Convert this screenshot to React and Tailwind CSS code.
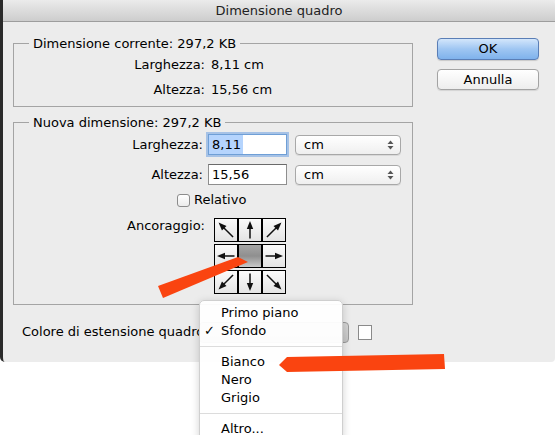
import React from "react";

const font = "font-['DejaVu_Sans',sans-serif]";

function Arrow({ angle = 0, diag = false }) {
	// base arrow points up; rotated around the cell centre
	const len = diag ? 10 : 8.5;
	return (
		<svg width="22" height="22" viewBox="0 0 22 22" className="overflow-visible">
			<g transform={`rotate(${angle} 11 11)`}>
				<line x1="11" y1={11 + len} x2="11" y2={11 - len + 5} stroke="#111" strokeWidth="1.5" />
				<polygon points={`11,${11 - len - 0.5} 7.8,${11 - len + 7.5} 14.2,${11 - len + 7.5}`} fill="#111" />
			</g>
		</svg>
	);
}

function Cell({ children, center }) {
	return (
		<div
			className={`w-[24px] h-[24px] border border-black flex items-center justify-center ${
				center
					? "bg-gradient-to-b from-[#a6a6a6] via-[#8f8f8f] to-[#c9c9c9]"
					: "bg-gradient-to-b from-[#fbfbfb] to-[#e4e4e4]"
			}`}
		>
			{children}
		</div>
	);
}

function Select({ label, className = "" }) {
	return (
		<div
			className={`h-[20px] rounded-[4px] border border-[#a8a8a8] bg-gradient-to-b from-white to-[#efefef] shadow-[0_1px_0_rgba(0,0,0,0.08)] flex items-center pl-[8px] pr-[6px] ${className}`}
		>
			<span className="flex-1 text-[13px] leading-none">{label}</span>
			<svg width="7" height="10" viewBox="0 0 7 10">
				<polygon points="3.5,0.5 6.5,4 0.5,4" fill="#555" />
				<polygon points="3.5,9.5 6.5,6 0.5,6" fill="#555" />
			</svg>
		</div>
	);
}

export default function App() {
	return (
		<div className={`relative w-[555px] h-[435px] overflow-hidden bg-white text-black ${font}`}>
			{/* dialog window */}
			<div className="h-[362px] bg-[#ececec] border-l-[3px] border-[#2a2a2a] rounded-bl-[5px] rounded-br-[4px] flex flex-col">
				{/* title bar */}
				<div className="h-[22px] shrink-0 bg-gradient-to-b from-[#ebebeb] to-[#cdcdcd] border-b border-[#9d9d9d] rounded-tr-[5px] flex items-center justify-center text-[13px] text-[#222]">
					Dimensione quadro
				</div>

				<div className="flex pl-[10px] pt-[14px]">
					{/* left column */}
					<div className="w-[400px]">
						<fieldset className="border border-[#a4a4a4] pb-[6px]">
							<legend className="ml-[15px] px-[4px] text-[13px] leading-[15px]">
								Dimensione corrente: 297,2 KB
							</legend>
							<div className="grid grid-cols-[191px_auto] gap-x-[6px] gap-y-[5px] pt-[4px] text-[13px] leading-[20px]">
								<span className="text-right">Larghezza:</span>
								<span>8,11 cm</span>
								<span className="text-right">Altezza:</span>
								<span>15,56 cm</span>
							</div>
						</fieldset>

						<fieldset className="mt-[8px] border border-[#a4a4a4] pb-[10px]">
							<legend className="ml-[15px] px-[4px] text-[13px] leading-[15px]">
								Nuova dimensione: 297,2 KB
							</legend>

							<div className="mt-[4px] flex items-center text-[13px]">
								<span className="w-[189px] text-right">Larghezza:</span>
								<div className="ml-[5px] w-[79px] h-[21px] border border-[#6f9fd6] bg-white shadow-[0_0_0_2px_rgba(110,160,225,0.55)] flex items-stretch">
									<span className="bg-[#b5d4fd] pl-[3px] pr-[3px] flex items-center w-[34px]">8,11</span>
								</div>
								<Select label="cm" className="ml-[8px] w-[106px]" />
							</div>

							<div className="mt-[9px] flex items-center text-[13px]">
								<span className="w-[189px] text-right">Altezza:</span>
								<div className="ml-[5px] w-[79px] h-[21px] border border-[#8e8e8e] border-t-[#6a6a6a] bg-white flex items-center pl-[3px]">
									15,56
								</div>
								<Select label="cm" className="ml-[8px] w-[106px]" />
							</div>

							<div className="mt-[8px] h-[14px] flex items-center pl-[163px] text-[13px]">
								<div className="w-[13px] h-[13px] rounded-[3px] border border-[#8c8c8c] bg-gradient-to-b from-white to-[#ececec]" />
								<span className="ml-[4px]">Relativo</span>
							</div>

							<div className="mt-[11px] flex items-start text-[13px]">
								<span className="w-[191px] text-right leading-[16px]">Ancoraggio:</span>
								<div className="ml-[9px] flex flex-col gap-[2px]">
									<div className="flex">
										<Cell><Arrow angle={-45} diag /></Cell>
										<Cell><Arrow angle={0} /></Cell>
										<Cell><Arrow angle={45} diag /></Cell>
									</div>
									<div className="flex">
										<Cell><Arrow angle={-90} /></Cell>
										<Cell center />
										<Cell><Arrow angle={90} /></Cell>
									</div>
									<div className="flex">
										<Cell><Arrow angle={-135} diag /></Cell>
										<Cell><Arrow angle={180} /></Cell>
										<Cell><Arrow angle={135} diag /></Cell>
									</div>
								</div>
							</div>
						</fieldset>

						{/* the text runs on under the popup menu, so it is cut at the menu edge */}
						<div className="mt-[16px] h-[22px] flex items-center pl-[9px] text-[13px]">
							<span className="w-[177px] overflow-hidden whitespace-nowrap">Colore di estensione quadro:</span>
							<div className="w-[150px] h-[21px] rounded-[4px] border border-[#9a9a9a] bg-gradient-to-b from-[#d6d6d6] to-[#c4c4c4]" />
							<div className="ml-[9px] w-[14px] h-[15px] border border-[#8a8a8a] bg-white" />
						</div>
					</div>

					{/* buttons */}
					<div className="ml-[24px] w-[102px] pt-[2px] text-[13px]">
						<div className="h-[22px] rounded-[4px] border border-[#5a7eb6] bg-gradient-to-b from-[#d3e6fb] via-[#9fc6f2] to-[#7fb2ec] flex items-center justify-center shadow-[0_1px_1px_rgba(0,0,0,0.15)]">
							OK
						</div>
						<div className="mt-[9px] h-[21px] rounded-[4px] border border-[#a3a3a3] bg-gradient-to-b from-white to-[#ededed] flex items-center justify-center shadow-[0_1px_1px_rgba(0,0,0,0.1)]">
							Annulla
						</div>
					</div>
				</div>
			</div>

			{/* popup menu */}
			<div className="absolute left-[199px] top-[300px] w-[144px] h-[140px] bg-white/95 border border-[#cfcfcf] rounded-t-[5px] shadow-[0_2px_8px_rgba(0,0,0,0.18)] pt-[3px] text-[13px]">
				{[
					{ t: "Primo piano" },
					{ t: "Sfondo", check: true },
					{ sep: true },
					{ t: "Bianco" },
					{ t: "Nero" },
					{ t: "Grigio" },
					{ sep: true },
					{ t: "Altro..." },
				].map((it, i) =>
					it.sep ? (
						<div key={i} className="h-[13px] flex items-center">
							<div className="h-px w-full bg-[#dcdcdc]" />
						</div>
					) : (
						<div key={i} className="h-[18px] flex items-center pl-[4px]">
							<span className="w-[17px]">{it.check ? "✓" : ""}</span>
							<span>{it.t}</span>
						</div>
					)
				)}
			</div>

			{/* orange annotation arrows */}
			<svg className="absolute left-0 top-0 pointer-events-none" width="555" height="435">
				<polygon points="158,286 238,257 248,262 163,298" fill="#fa4410" />
				<polygon points="279,365 287,357 444,354 445,369 287,372" fill="#fa4410" />
			</svg>
		</div>
	);
}
